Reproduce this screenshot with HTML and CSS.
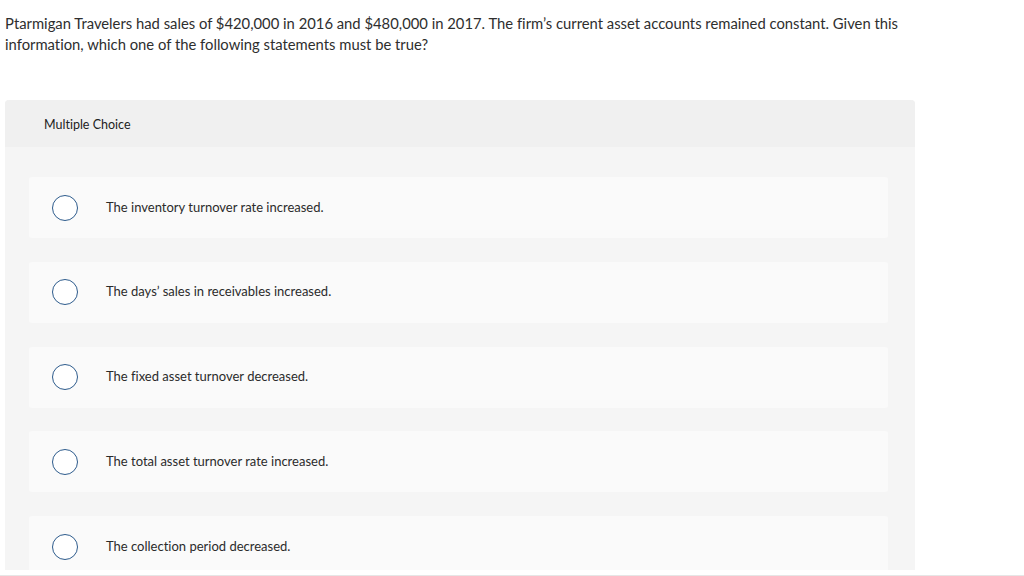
FILE: index.html
```
<!DOCTYPE html>
<html lang="en">
<head>
<meta charset="utf-8">
<title>Multiple Choice</title>
<link rel="stylesheet" href="styles.css">
</head>
<body>
<div class="viewport">
  <p class="question">Ptarmigan Travelers had sales of $420,000 in 2016 and $480,000 in 2017. The firm’s current asset accounts remained constant. Given this information, which one of the following statements must be true?</p>
  <section class="card">
    <header class="card-head">Multiple Choice</header>
    <div class="card-body">
      <label class="option"><span class="radio"></span><span class="opt-text">The inventory turnover rate increased.</span></label>
      <label class="option"><span class="radio"></span><span class="opt-text">The days’ sales in receivables increased.</span></label>
      <label class="option"><span class="radio"></span><span class="opt-text">The fixed asset turnover decreased.</span></label>
      <label class="option"><span class="radio"></span><span class="opt-text">The total asset turnover rate increased.</span></label>
      <label class="option"><span class="radio"></span><span class="opt-text">The collection period decreased.</span></label>
    </div>
  </section>
</div>
<div class="footer-line"></div>
</body>
</html>
```
FILE: styles.css
```
html, body {
  margin: 0;
  padding: 0;
  background: #ffffff;
}
body {
  font-family: "Lato", "Open Sans", sans-serif;
  color: #333333;
  font-variant-ligatures: none;
}
.viewport {
  height: 570px;
  overflow: hidden;
  padding: 0 100px 0 5px;
  margin-bottom: 5px;
}
.question {
  margin: 0;
  padding-top: 13px;
  font-size: 14.8px;
  line-height: 21px;
  color: #2e2e2e;
}
.card {
  margin-top: 45px;
  width: 910px;
  border-radius: 4px 4px 0 0;
  background: #f5f5f5;
}
.card-head {
  height: 47px;
  box-sizing: border-box;
  padding-top: 2px;
  display: flex;
  align-items: center;
  padding-left: 39px;
  background: #f0f0f0;
  border-radius: 4px 4px 0 0;
  font-size: 12.5px;
  color: #222222;
}
.card-body {
  display: flex;
  flex-direction: column;
  gap: 23.75px;
  padding: 30px 27px 40px 24px;
}
.option {
  height: 61px;
  display: flex;
  align-items: center;
  background: #fafafa;
  border-radius: 3px;
  padding-left: 23px;
  font-size: 13px;
  color: #2b2b2b;
}
.radio {
  width: 24px;
  height: 24px;
  border: 1px solid #2d5b8c;
  border-radius: 50%;
  flex: none;
  background: #ffffff;
}
.opt-text {
  margin-left: 28px;
  margin-bottom: 2px;
}
.footer-line {
  height: 1px;
  background: #e6e6e6;
}
```
